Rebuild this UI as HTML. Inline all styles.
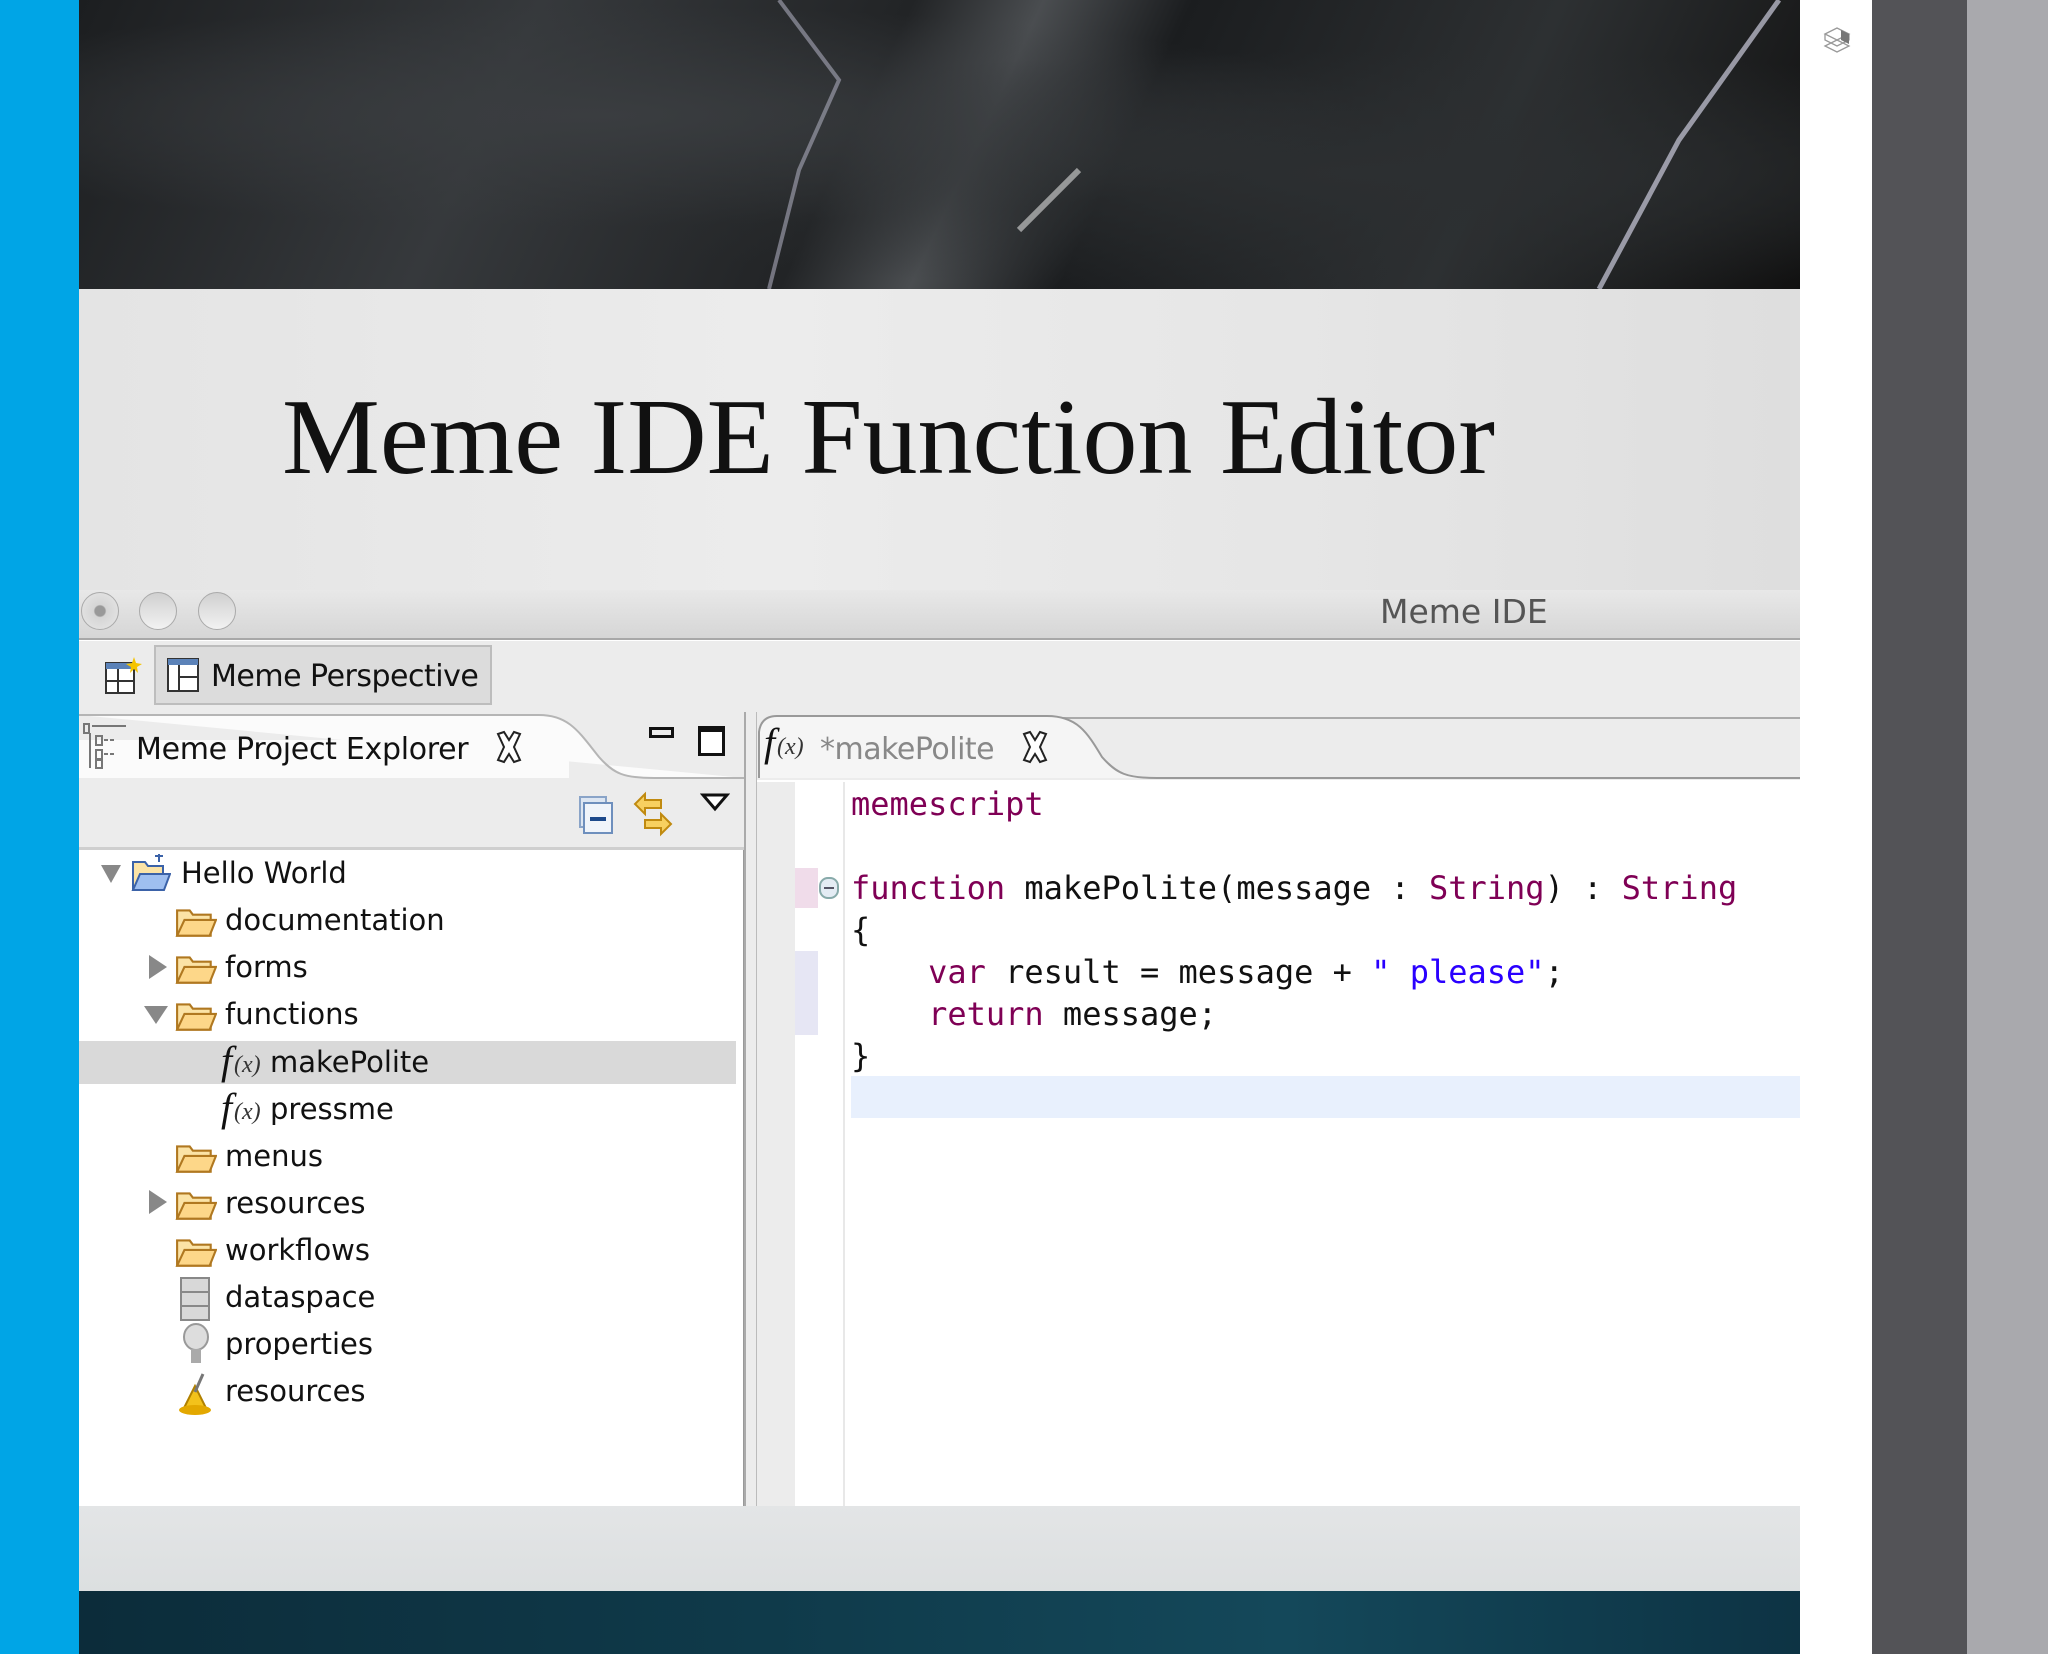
<!DOCTYPE html>
<html><head><meta charset="utf-8">
<style>
*{margin:0;padding:0;box-sizing:border-box}
body{width:2048px;height:1654px;position:relative;overflow:hidden;background:#fff;font-family:"Liberation Sans","DejaVu Sans",sans-serif}
.abs{position:absolute}
.tree{font-family:"DejaVu Sans","Liberation Sans",sans-serif;font-size:29px;color:#111}
.row{position:absolute;left:0;height:47px;line-height:47px;white-space:nowrap}
.code{font-family:"DejaVu Sans Mono","Liberation Mono",monospace;font-size:32px;white-space:pre;position:absolute;left:851px;line-height:42px;color:#111}
.kw{color:#7f0055}
.str{color:#2a00ff}
</style></head><body>
<div class="abs" style="left:0;top:0;width:79px;height:1654px;background:#00a5e6"></div>
<div class="abs" style="left:1800px;top:0;width:72px;height:1654px;background:#fff"></div>
<div class="abs" style="left:1872px;top:0;width:95px;height:1654px;background:#535357"></div>
<div class="abs" style="left:1967px;top:0;width:81px;height:1654px;background:#a9a9ad"></div>
<svg class="abs" style="left:1823px;top:26px" width="28" height="34" viewBox="0 0 28 34"><path d="M2 8 L14 2 L26 8 L14 14 Z M2 8 V14 L14 20 L26 14 V8 M2 20 L14 14 L26 20 L14 26 Z" fill="none" stroke="#999" stroke-width="1.3"/><path d="M18 4 L26 8 V18 L18 14Z" fill="#777"/></svg>
<div class="abs" style="left:79px;top:0;width:1721px;height:289px;background:
radial-gradient(ellipse at 30% 40%,#3a3d40 0%,transparent 45%),
radial-gradient(ellipse at 75% 60%,#2c2f31 0%,transparent 50%),
linear-gradient(115deg,#1c1e20 0%,#36393c 25%,#222426 45%,#4a4d50 52%,#1b1d1f 60%,#2d3032 80%,#111 100%)"></div>
<svg class="abs" style="left:79px;top:0" width="1721" height="289"><path d="M700 0 L760 80 L720 170 L690 289" stroke="#aab" stroke-width="4" fill="none" opacity=".6"/><path d="M1700 0 L1600 140 L1520 289" stroke="#ccd" stroke-width="5" fill="none" opacity=".7"/><path d="M1000 170 L940 230" stroke="#ddd" stroke-width="6" opacity=".6"/></svg>
<div class="abs" style="left:79px;top:289px;width:1721px;height:301px;background:linear-gradient(90deg,#e4e4e4,#ececec 40%,#e6e6e6 70%,#dedede)"></div>
<svg class="abs" style="left:79px;top:289px" width="1721" height="301"><text x="203" y="184" font-family="Liberation Serif,serif" font-size="108" fill="#111" textLength="1213" lengthAdjust="spacingAndGlyphs">Meme IDE Function Editor</text></svg>
<div class="abs" style="left:79px;top:590px;width:1721px;height:50px;background:linear-gradient(#e8e8e8,#d6d6d6);border-bottom:2px solid #a8a8a8"></div>
<div class="abs" style="left:81px;top:592px;width:38px;height:38px;border-radius:50%;background:radial-gradient(circle,#999 0 20%,#d5d5d5 25%,#e8e8e8);border:1px solid #aaa"></div>
<div class="abs" style="left:139px;top:592px;width:38px;height:38px;border-radius:50%;background:linear-gradient(#d0d0d0,#f2f2f2);border:1px solid #aaa"></div>
<div class="abs" style="left:198px;top:592px;width:38px;height:38px;border-radius:50%;background:linear-gradient(#d0d0d0,#f2f2f2);border:1px solid #aaa"></div>
<div class="abs" style="left:1380px;top:590px;height:44px;line-height:44px;font-size:33px;color:#555;font-family:'DejaVu Sans',sans-serif">Meme IDE</div>
<div class="abs" style="left:79px;top:641px;width:1721px;height:71px;background:#ececec"></div>
<svg class="abs" style="left:104px;top:655px" width="40" height="42"><rect x="2" y="8" width="28" height="30" fill="#fff" stroke="#333" stroke-width="2"/><rect x="2" y="8" width="28" height="6" fill="#5b82b8"/><line x1="14" y1="14" x2="14" y2="38" stroke="#333" stroke-width="2"/><line x1="2" y1="26" x2="30" y2="26" stroke="#333" stroke-width="2"/><path d="M30 2 L32 8 L38 9 L33 12 L34 18 L30 14 L26 18 L27 12 L22 9 L28 8Z" fill="#f5c400"/></svg>
<div class="abs" style="left:154px;top:645px;width:338px;height:60px;background:#dcdcdc;border:2px solid #bdbdbd"></div>
<svg class="abs" style="left:166px;top:657px" width="36" height="38"><rect x="2" y="2" width="30" height="32" fill="#fff" stroke="#333" stroke-width="2"/><rect x="2" y="2" width="30" height="6" fill="#5b82b8"/><line x1="13" y1="8" x2="13" y2="34" stroke="#333" stroke-width="2"/><line x1="13" y1="20" x2="32" y2="20" stroke="#333" stroke-width="2"/></svg>
<div class="abs" style="left:211px;top:652px;line-height:50px;font-size:30px;color:#111;font-family:'DejaVu Sans',sans-serif;letter-spacing:-0.5px">Meme Perspective</div>
<div class="abs" style="left:79px;top:712px;width:665px;height:794px;background:#fff;border-right:1px solid #999"></div>
<div class="abs" style="left:79px;top:712px;width:665px;height:138px;background:#ececec;border-bottom:3px solid #cfcfcf"></div>
<svg class="abs" style="left:79px;top:712px" width="665" height="70"><path d="M0 3 H460 C490 3 500 20 520 45 C535 62 545 66 575 66 H665" fill="#fbfbfb" stroke="#b5b5b5" stroke-width="2"/></svg>
<div class="abs" style="left:79px;top:740px;width:490px;height:38px;background:#fbfbfb"></div>
<svg class="abs" style="left:82px;top:722px" width="46" height="48"><g fill="none" stroke="#777" stroke-width="2"><rect x="2" y="2" width="5" height="9"/><line x1="10" y1="4" x2="44" y2="4"/><rect x="14" y="14" width="6" height="9"/><rect x="14" y="28" width="6" height="9"/><line x1="22" y1="18" x2="32" y2="18" stroke-dasharray="4 2"/><line x1="22" y1="32" x2="32" y2="32" stroke-dasharray="4 2"/><line x1="8" y1="11" x2="8" y2="46"/><rect x="14" y="38" width="6" height="8"/></g></svg>
<div class="abs" style="left:136px;top:728px;line-height:44px;font-size:30px;color:#111;font-family:'DejaVu Sans',sans-serif;letter-spacing:-0.3px">Meme Project Explorer</div>
<svg class="abs" style="left:494px;top:730px" width="30" height="34"><path d="M4 4 L10 2 L15 10 L20 2 L26 4 L20 17 L26 30 L20 32 L15 24 L10 32 L4 30 L10 17Z" fill="#fff" stroke="#222" stroke-width="2"/></svg>
<div class="abs" style="left:649px;top:727px;width:25px;height:11px;border:3px solid #111"></div>
<div class="abs" style="left:698px;top:726px;width:27px;height:30px;border:3px solid #111;border-top-width:6px;background:#fff"></div>
<svg class="abs" style="left:576px;top:795px" width="40" height="42"><rect x="4" y="2" width="26" height="30" fill="#dde6f2" stroke="#8aa4c8" stroke-width="2"/><rect x="8" y="8" width="28" height="30" fill="#f0f4fa" stroke="#6e8fbd" stroke-width="2"/><line x1="14" y1="24" x2="30" y2="24" stroke="#1d4a8c" stroke-width="4"/></svg>
<svg class="abs" style="left:631px;top:790px" width="50" height="50"><path d="M14 4 L4 14 L14 24 V18 H30 V10 H14Z" fill="#f7d060" stroke="#c08a10" stroke-width="2"/><path d="M30 24 L40 34 L30 44 V38 H14 V30 H30Z" fill="#f7d060" stroke="#c08a10" stroke-width="2"/></svg>
<svg class="abs" style="left:700px;top:792px" width="30" height="22"><path d="M3 3 H27 L15 17Z" fill="#fff" stroke="#111" stroke-width="3"/></svg>
<div class="abs tree" style="left:79px;top:850px;width:657px;height:656px">
<div class="abs" style="left:0;top:191px;width:657px;height:43px;background:#d9d9d9"></div>
<svg width="0" height="0" style="position:absolute"><defs><symbol id="fold" viewBox="0 0 40 34"><path d="M2 6 H14 L17 10 H34 V30 H2Z" fill="#fbe3a6" stroke="#b07820" stroke-width="2"/><path d="M2 30 L9 15 H39 L33 30Z" fill="#fdd789" stroke="#b07820" stroke-width="2"/></symbol>
<symbol id="fx" viewBox="0 0 48 40"><text x="0" y="32" font-family="Liberation Serif,serif" font-style="italic" font-size="40" fill="#111">f</text><text x="13" y="30" font-family="Liberation Serif,serif" font-style="italic" font-size="24" fill="#333">(x)</text></symbol></defs></svg>
<svg class="abs" style="left:21px;top:13px" width="22" height="22"><path d="M1 2 H21 L11 20Z" fill="#888"/></svg>
<svg class="abs" style="left:52px;top:2px" width="40" height="42"><path d="M2 10 H14 L17 14 H32 V38 H2Z" fill="#fbe3a6" stroke="#3b62a8" stroke-width="2"/><path d="M2 38 L9 22 H39 L33 38Z" fill="#9fbff0" stroke="#3b62a8" stroke-width="2"/><path d="M28 2 V10 M24 4 H32" stroke="#3b62a8" stroke-width="2"/></svg>
<div class="row" style="left:102px;top:0">Hello World</div>
<svg class="abs" style="left:96px;top:54px" width="42" height="36"><use href="#fold"/></svg><div class="row" style="left:146px;top:47px">documentation</div>
<svg class="abs" style="left:68px;top:104px" width="22" height="26"><path d="M2 1 V25 L20 13Z" fill="#888"/></svg>
<svg class="abs" style="left:96px;top:101px" width="42" height="36"><use href="#fold"/></svg><div class="row" style="left:146px;top:94px">forms</div>
<svg class="abs" style="left:64px;top:154px" width="26" height="22"><path d="M1 2 H25 L13 20Z" fill="#888"/></svg>
<svg class="abs" style="left:96px;top:148px" width="42" height="36"><use href="#fold"/></svg><div class="row" style="left:146px;top:141px">functions</div>
<svg class="abs" style="left:142px;top:190px" width="48" height="44"><use href="#fx"/></svg><div class="row" style="left:191px;top:189px">makePolite</div>
<svg class="abs" style="left:142px;top:237px" width="48" height="44"><use href="#fx"/></svg><div class="row" style="left:191px;top:236px">pressme</div>
<svg class="abs" style="left:96px;top:290px" width="42" height="36"><use href="#fold"/></svg><div class="row" style="left:146px;top:283px">menus</div>
<svg class="abs" style="left:68px;top:339px" width="22" height="26"><path d="M2 1 V25 L20 13Z" fill="#888"/></svg>
<svg class="abs" style="left:96px;top:337px" width="42" height="36"><use href="#fold"/></svg><div class="row" style="left:146px;top:330px">resources</div>
<svg class="abs" style="left:96px;top:384px" width="42" height="36"><use href="#fold"/></svg><div class="row" style="left:146px;top:377px">workflows</div>
<svg class="abs" style="left:100px;top:426px" width="32" height="46"><rect x="2" y="2" width="28" height="42" fill="#d8d8d8" stroke="#888" stroke-width="2"/><line x1="2" y1="16" x2="30" y2="16" stroke="#888" stroke-width="2"/><line x1="2" y1="30" x2="30" y2="30" stroke="#888" stroke-width="2"/></svg><div class="row" style="left:146px;top:424px">dataspace</div>
<svg class="abs" style="left:102px;top:472px" width="30" height="46"><ellipse cx="15" cy="15" rx="12" ry="13" fill="#ddd" stroke="#999" stroke-width="2"/><rect x="10" y="27" width="10" height="14" fill="#aaa"/></svg><div class="row" style="left:146px;top:471px">properties</div>
<svg class="abs" style="left:98px;top:520px" width="38" height="46"><path d="M6 40 L18 16 L30 40Z" fill="#f3c21b" stroke="#b08000" stroke-width="2"/><ellipse cx="18" cy="40" rx="16" ry="5" fill="#e3a800"/><line x1="18" y1="22" x2="26" y2="4" stroke="#777" stroke-width="3"/></svg><div class="row" style="left:146px;top:518px">resources</div>
</div>
<div class="abs" style="left:744px;top:712px;width:13px;height:794px;background:#ececec;border-left:2px solid #aaa;border-right:1px solid #bbb"></div>
<div class="abs" style="left:757px;top:712px;width:1043px;height:794px;background:#fff"></div>
<div class="abs" style="left:757px;top:712px;width:1043px;height:68px;background:#ececec"></div>
<svg class="abs" style="left:757px;top:712px" width="1043" height="70"><path d="M4 20 Q6 6 20 6 H1043" fill="none" stroke="#aaa" stroke-width="2"/><path d="M2 66 V20 Q4 4 20 4 H290 C320 4 330 20 345 45 C360 62 370 66 400 66 H1043" fill="#f5f5f5" stroke="#999" stroke-width="2"/></svg>
<svg class="abs" style="left:764px;top:722px" width="48" height="44"><use href="#fx"/></svg>
<div class="abs" style="left:820px;top:728px;line-height:44px;font-size:30px;color:#888;font-family:'DejaVu Sans',sans-serif;letter-spacing:-0.5px">*makePolite</div>
<svg class="abs" style="left:1020px;top:730px" width="30" height="34"><path d="M4 4 L10 2 L15 10 L20 2 L26 4 L20 17 L26 30 L20 32 L15 24 L10 32 L4 30 L10 17Z" fill="#fff" stroke="#222" stroke-width="2"/></svg>
<div class="abs" style="left:757px;top:782px;width:38px;height:724px;background:#ececec"></div>
<div class="abs" style="left:795px;top:868px;width:23px;height:40px;background:#f0dcea"></div>
<div class="abs" style="left:795px;top:951px;width:23px;height:84px;background:#e6e6f4"></div>
<svg class="abs" style="left:818px;top:876px" width="22" height="24"><rect x="2" y="2" width="18" height="20" rx="8" fill="#e4ecf4" stroke="#8aa" stroke-width="2"/><line x1="6" y1="12" x2="16" y2="12" stroke="#556" stroke-width="2"/></svg>
<div class="abs" style="left:843px;top:782px;width:2px;height:724px;background:#e8e8e8"></div>
<div class="abs" style="left:851px;top:1076px;width:949px;height:42px;background:#e8f0fd"></div>
<div class="code" style="top:783px"><span class="kw">memescript</span></div>
<div class="code" style="top:867px"><span class="kw">function</span> makePolite(message : <span class="kw">String</span>) : <span class="kw">String</span></div>
<div class="code" style="top:909px">{</div>
<div class="code" style="top:951px">    <span class="kw">var</span> result = message + <span class="str">" please"</span>;</div>
<div class="code" style="top:993px">    <span class="kw">return</span> message;</div>
<div class="code" style="top:1035px">}</div>
<div class="abs" style="left:79px;top:1506px;width:1721px;height:85px;background:linear-gradient(#e3e5e6,#dcdfe0)"></div>
<div class="abs" style="left:79px;top:1591px;width:1721px;height:63px;background:linear-gradient(90deg,#0c2c3a,#0f3a4a 40%,#14485a 70%,#0d3344)"></div>
</body></html>
